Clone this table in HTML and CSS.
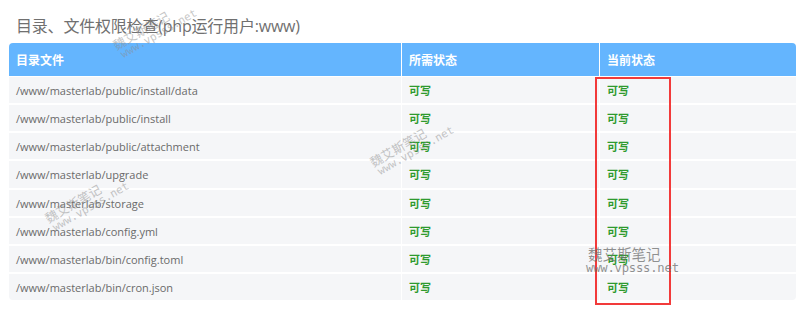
FILE: index.html
```html
<!DOCTYPE html>
<html lang="zh">
<head>
<meta charset="utf-8">
<link rel="stylesheet" href="styles.css">
</head>
<body>
<div class="page">
  <h2 class="title">目录、文件权限检查(php运行用户:www)</h2>
  <div class="table">
    <div class="row head">
      <div class="cell">目录文件</div>
      <div class="cell">所需状态</div>
      <div class="cell">当前状态</div>
    </div>
    <div class="row"><div class="cell path">/www/masterlab/public/install/data</div><div class="cell ok">可写</div><div class="cell ok">可写</div></div>
    <div class="row"><div class="cell path">/www/masterlab/public/install</div><div class="cell ok">可写</div><div class="cell ok">可写</div></div>
    <div class="row"><div class="cell path">/www/masterlab/public/attachment</div><div class="cell ok">可写</div><div class="cell ok">可写</div></div>
    <div class="row"><div class="cell path">/www/masterlab/upgrade</div><div class="cell ok">可写</div><div class="cell ok">可写</div></div>
    <div class="row"><div class="cell path">/www/masterlab/storage</div><div class="cell ok">可写</div><div class="cell ok">可写</div></div>
    <div class="row"><div class="cell path">/www/masterlab/config.yml</div><div class="cell ok">可写</div><div class="cell ok">可写</div></div>
    <div class="row"><div class="cell path">/www/masterlab/bin/config.toml</div><div class="cell ok">可写</div><div class="cell ok">可写</div></div>
    <div class="row last"><div class="cell path">/www/masterlab/bin/cron.json</div><div class="cell ok">可写</div><div class="cell ok">可写</div></div>
  </div>
  <div class="redbox"></div>
  <div class="wm wm1"><span>魏艾斯笔记</span><span class="url">www.vpsss.net</span></div>
  <div class="wm wm2"><span>魏艾斯笔记</span><span class="url">www.vpsss.net</span></div>
  <div class="wm wm3"><span>魏艾斯笔记</span><span class="url">www.vpsss.net</span></div>
  <div class="wm-flat"><span class="cn">魏艾斯笔记</span><span class="url">www.vpsss.net</span></div>
</div>
</body>
</html>
```
FILE: styles.css
```css
html, body {
  margin: 0;
  padding: 0;
  background: #fff;
}
.page {
  position: relative;
  width: 800px;
  height: 323px;
  padding: 16px 4px 0 9px;
  box-sizing: border-box;
  font-family: "Open Sans", "Noto Sans CJK SC", sans-serif;
}
.title {
  margin: 0 0 6px 7px;
  font-weight: normal;
  font-size: 16px;
  line-height: 21px;
  color: #707070;
  letter-spacing: -0.2px;
}
.table {
  width: 787px;
  border-radius: 4px;
  overflow: hidden;
}
.row {
  display: grid;
  grid-template-columns: 392px 198px 1fr;
  height: 26.15px;
  border-bottom: 2px solid #fff;
  background: #f5f6f8;
}
.row.last {
  border-bottom: 0;
}
.row.head {
  height: 33px;
  border-bottom: 1px solid #fff;
  background: #64b5fe;
}
.cell {
  display: flex;
  align-items: center;
  padding-left: 7px;
  font-size: 11px;
  color: #6a6a6a;
  border-left: 1px solid #fff;
}
.cell:first-child {
  border-left: 0;
}
.path {
  padding-top: 1px;
}
.head .cell {
  color: #fff;
  font-weight: bold;
  font-size: 12px;
  font-family: "Noto Sans CJK SC", sans-serif;
}
.ok {
  color: #2e9a2e;
  font-weight: bold;
  font-family: "Noto Sans CJK SC", sans-serif;
  font-size: 11px;
}
.redbox {
  position: absolute;
  left: 595px;
  top: 77px;
  width: 72px;
  height: 224px;
  border: 2px solid #f23a3a;
}
.wm {
  position: absolute;
  display: flex;
  flex-direction: column;
  transform: rotate(-30deg);
  transform-origin: left top;
  color: rgba(140, 140, 140, 0.5);
  font-family: "Noto Sans CJK SC", sans-serif;
  font-size: 12.5px;
  line-height: 12px;
  white-space: nowrap;
}
.wm .url {
  font-family: "DejaVu Sans Mono", monospace;
  font-size: 11px;
  line-height: 11px;
  padding-left: 2px;
}
.wm1 { left: 111px; top: 41px; }
.wm2 { left: 368px; top: 158px; }
.wm3 { left: 43px; top: 214px; }
.wm-flat {
  position: absolute;
  left: 586px;
  top: 245px;
  display: flex;
  flex-direction: column;
  color: rgba(110, 110, 110, 0.75);
  white-space: nowrap;
}
.wm-flat .cn {
  font-family: "Noto Sans CJK SC", sans-serif;
  font-size: 14.5px;
  line-height: 17px;
  padding-left: 2px;
}
.wm-flat .url {
  font-family: "DejaVu Sans Mono", monospace;
  font-size: 12.2px;
  line-height: 12px;
  letter-spacing: -0.2px;
}
```
